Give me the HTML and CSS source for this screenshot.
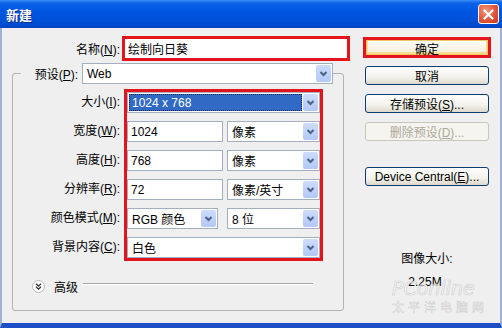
FILE: index.html
```html
<!DOCTYPE html>
<html lang="zh-CN">
<head>
    <meta charset="UTF-8">
    <title>新建</title>
    <link rel="stylesheet" href="styles.css">
</head>
<body>
    <div class="window">
        <div class="titlebar">
            <span class="title">新建</span>
            <span class="close">
                <svg width="13" height="13" viewBox="0 0 13 13"><path d="M2.5 2.5 L10.5 10.5 M10.5 2.5 L2.5 10.5" stroke="#fff" stroke-width="2.2" stroke-linecap="round"/></svg>
            </span>
        </div>
        <div class="dialog">
            <div class="main">
                <div class="name-row">
                    <label class="lbl name-lbl" for="docName">名称(<u>N</u>):</label>
                    <input class="name-input" type="text" id="docName" value="绘制向日葵">
                </div>
                <fieldset class="group">
                    <legend>
                        <div class="legend-row">
                            <span class="preset-lbl">预设(<u>P</u>):</span>
                            <div class="select preset-select">
                                <span class="value">Web</span>
                                <span class="arrow"><svg width="15" height="17" viewBox="0 0 15 17"><path d="M4.5 7 L7.5 10 L10.5 7" stroke="#4d6185" stroke-width="2" fill="none"/></svg></span>
                            </div>
                        </div>
                    </legend>
                    <div class="size-area">
                        <div class="labels">
                            <span>大小(<u>I</u>):</span>
                            <span>宽度(<u>W</u>):</span>
                            <span>高度(<u>H</u>):</span>
                            <span>分辨率(<u>R</u>):</span>
                            <span>颜色模式(<u>M</u>):</span>
                            <span>背景内容(<u>C</u>):</span>
                        </div>
                        <div class="red-box">
                            <div class="select full">
                                <span class="value hl">1024 x 768</span>
                                <span class="arrow"><svg width="15" height="17" viewBox="0 0 15 17"><path d="M4.5 7 L7.5 10 L10.5 7" stroke="#4d6185" stroke-width="2" fill="none"/></svg></span>
                            </div>
                            <div class="pair">
                                <input class="field num" type="text" value="1024">
                                <div class="select unit">
                                    <span class="value">像素</span>
                                    <span class="arrow"><svg width="15" height="17" viewBox="0 0 15 17"><path d="M4.5 7 L7.5 10 L10.5 7" stroke="#4d6185" stroke-width="2" fill="none"/></svg></span>
                                </div>
                            </div>
                            <div class="pair">
                                <input class="field num" type="text" value="768">
                                <div class="select unit">
                                    <span class="value">像素</span>
                                    <span class="arrow"><svg width="15" height="17" viewBox="0 0 15 17"><path d="M4.5 7 L7.5 10 L10.5 7" stroke="#4d6185" stroke-width="2" fill="none"/></svg></span>
                                </div>
                            </div>
                            <div class="pair">
                                <input class="field num" type="text" value="72">
                                <div class="select unit">
                                    <span class="value">像素/英寸</span>
                                    <span class="arrow"><svg width="15" height="17" viewBox="0 0 15 17"><path d="M4.5 7 L7.5 10 L10.5 7" stroke="#4d6185" stroke-width="2" fill="none"/></svg></span>
                                </div>
                            </div>
                            <div class="pair">
                                <div class="select mode">
                                    <span class="value">RGB 颜色</span>
                                    <span class="arrow"><svg width="15" height="17" viewBox="0 0 15 17"><path d="M4.5 7 L7.5 10 L10.5 7" stroke="#4d6185" stroke-width="2" fill="none"/></svg></span>
                                </div>
                                <div class="select unit">
                                    <span class="value">8 位</span>
                                    <span class="arrow"><svg width="15" height="17" viewBox="0 0 15 17"><path d="M4.5 7 L7.5 10 L10.5 7" stroke="#4d6185" stroke-width="2" fill="none"/></svg></span>
                                </div>
                            </div>
                            <div class="select full">
                                <span class="value">白色</span>
                                <span class="arrow"><svg width="15" height="17" viewBox="0 0 15 17"><path d="M4.5 7 L7.5 10 L10.5 7" stroke="#4d6185" stroke-width="2" fill="none"/></svg></span>
                            </div>
                        </div>
                    </div>
                    <div class="advanced">
                        <span class="adv-icon">
                            <svg width="13" height="13" viewBox="0 0 13 13"><circle cx="6.5" cy="6.5" r="6" fill="#fff" stroke="#b9b9b9"/><path d="M4 3.8 L6.5 6.2 L9 3.8 M4 6.8 L6.5 9.2 L9 6.8" stroke="#333" stroke-width="1.3" fill="none"/></svg>
                        </span>
                        <span class="adv-text">高级</span>
                        <span class="rule"></span>
                    </div>
                </fieldset>
            </div>
            <div class="side">
                <div class="default-ring"><button class="btn ok">确定</button></div>
                <button class="btn cancel">取消</button>
                <button class="btn save">存储预设(<u>S</u>)...</button>
                <button class="btn delete" disabled>删除预设(<u>D</u>)...</button>
                <button class="btn device">Device Central(<u>E</u>)...</button>
                <div class="img-size">图像大小:</div>
                <div class="img-size-val">2.25M</div>
            </div>
            <!-- faint site watermark over the corner -->
            <div class="watermark">
                <div class="wm-logo">PConline</div>
                <div class="wm-name">太平洋电脑网</div>
            </div>
        </div>
    </div>
</body>
</html>
```

FILE: styles.css
```css
body {
    margin: 0;
    font-family: "Liberation Sans", "Noto Sans CJK SC", sans-serif;
    font-size: 12px;
    color: #000;
    background: #fff;
}
.window {
    width: 502px;
    height: 328px;
    display: flex;
    flex-direction: column;
    overflow: hidden;
}
.titlebar {
    height: 28px;
    flex: none;
    display: flex;
    align-items: center;
    justify-content: space-between;
    padding: 0 3px 0 6px;
    background: linear-gradient(#3a8cf6 0, #0c62e6 3px, #0057e3 10px, #0052da 20px, #0445c4 28px);
}
.title {
    color: #fff;
    font-family: "Noto Sans CJK SC", sans-serif;
    font-weight: bold;
    font-size: 13px;
    text-shadow: 1px 1px 0 #0b2a86;
}
.close {
    width: 21px;
    height: 20px;
    box-sizing: border-box;
    border: 1px solid #fff;
    border-radius: 3px;
    background: radial-gradient(circle at 35% 30%, #f3977a, #e0553a 55%, #c8391f);
    display: flex;
    align-items: center;
    justify-content: center;
}
.dialog {
    flex: 1;
    display: flex;
    position: relative;
    background: #efefef;
    border-left: 2px solid #9fb1d6;
    border-right: 2px solid #9fb1d6;
    border-bottom: 5px solid #1d4fc7;
}
.main {
    width: 348px;
    flex: none;
}
.name-row {
    display: flex;
    align-items: center;
    margin-top: 8px;
}
.name-lbl {
    width: 118px;
    margin-right: 2px;
    text-align: right;
}
.name-input {
    width: 228px;
    height: 25px;
    box-sizing: border-box;
    border: 3px solid #e3141b;
    background: #fff;
    padding: 0 3px;
    font: inherit;
    outline: none;
}
.group {
    margin: 2px 0 0 10px;
    padding: 0 0 17px;
    width: 332px;
    min-width: 0;
    box-sizing: border-box;
    border: 1px solid #b3b3b3;
    border-radius: 3px;
}
.group legend {
    margin-left: 8px;
    padding: 0;
}
.legend-row {
    display: flex;
    align-items: center;
}
.preset-lbl {
    width: 57px;
    text-align: right;
}
.preset-select {
    width: 251px;
    height: 22px;
    margin-left: 4px;
}
.size-area {
    display: flex;
    margin-top: 5px;
}
.labels {
    width: 107px;
    margin-right: 4px;
    padding-top: 3px;
    display: flex;
    flex-direction: column;
    gap: 8px;
}
.labels span {
    height: 21px;
    line-height: 21px;
    text-align: right;
    white-space: nowrap;
}
.red-box {
    width: 199px;
    box-sizing: border-box;
    border: 3px solid #e3141b;
    display: flex;
    flex-direction: column;
    gap: 8px;
}
.pair {
    display: flex;
    justify-content: space-between;
}
.field {
    height: 21px;
    box-sizing: border-box;
    border: 1px solid #a3aebf;
    background: #fff;
    padding: 0 3px;
    font: inherit;
    outline: none;
}
.num {
    width: 96px;
}
.select {
    height: 21px;
    box-sizing: border-box;
    border: 1px solid #a3aebf;
    background: #fff;
    padding: 1px;
    display: flex;
}
.select .value {
    flex: 1;
    display: flex;
    align-items: center;
    padding-left: 3px;
    white-space: nowrap;
}
.select .hl {
    background: #316ac5;
    color: #fff;
    outline: 1px dotted #1b2a55;
    outline-offset: -1px;
    margin-right: 1px;
}
.select .arrow {
    width: 15px;
    flex: none;
    border-radius: 2px;
    background: linear-gradient(#cddcfd, #b3c8f6);
    display: flex;
    align-items: center;
    justify-content: center;
}
.full {
    width: 193px;
}
.unit {
    width: 93px;
}
.mode {
    width: 91px;
}
.advanced {
    display: flex;
    align-items: center;
    height: 14px;
    margin: 18px 0 0 19px;
}
.adv-icon {
    display: flex;
}
.adv-text {
    margin-left: 9px;
}
.rule {
    flex: 1;
    align-self: flex-start;
    height: 1px;
    margin: 4px 30px 0 5px;
    background: #a8a8a8;
    border-bottom: 1px solid #fff;
}
.side {
    flex: 1;
    padding: 9px 0 0 13px;
    display: flex;
    flex-direction: column;
}
.default-ring {
    width: 128px;
    height: 21px;
    box-sizing: border-box;
    border: 3px solid #e3141b;
}
.btn {
    display: block;
    width: 124px;
    height: 19px;
    margin-left: 2px;
    padding: 0;
    border: 1px solid #0b3c73;
    border-radius: 3px;
    background: linear-gradient(#ffffff, #f3f2ec 60%, #dcd8cc);
    font: inherit;
    color: #000;
}
.btn.ok {
    width: 100%;
    height: 100%;
    margin: 0;
    border: none;
    border-radius: 0;
    background: linear-gradient(#fffef8, #f1ecd9);
    box-shadow: inset 0 0 0 1px #efc766, inset 0 -1px 0 2px #f7dc92;
}
.cancel {
    margin-top: 8px;
}
.save,
.delete {
    margin-top: 9px;
}
.delete {
    border-color: #c9c7ba;
    background: #f5f4ee;
    color: #aca899;
}
.device {
    margin-top: 26px;
}
.img-size {
    width: 128px;
    margin-top: 66px;
    line-height: 14px;
    text-align: center;
}
.img-size-val {
    width: 124px;
    margin-top: 9px;
    line-height: 14px;
    text-align: center;
}
.watermark {
    position: absolute;
    left: 390px;
    top: 249px;
    color: rgba(255, 255, 255, 0.55);
    pointer-events: none;
}
.wm-logo {
    font-family: "DejaVu Sans", sans-serif;
    font-size: 19px;
    font-style: italic;
    line-height: 22px;
    -webkit-text-stroke: 0.6px #cdcdcd;
}
.wm-name {
    font-family: "Noto Sans CJK SC", sans-serif;
    font-size: 12px;
    line-height: 16px;
    letter-spacing: 4px;
    -webkit-text-stroke: 0.5px #cfcfcf;
}
```
